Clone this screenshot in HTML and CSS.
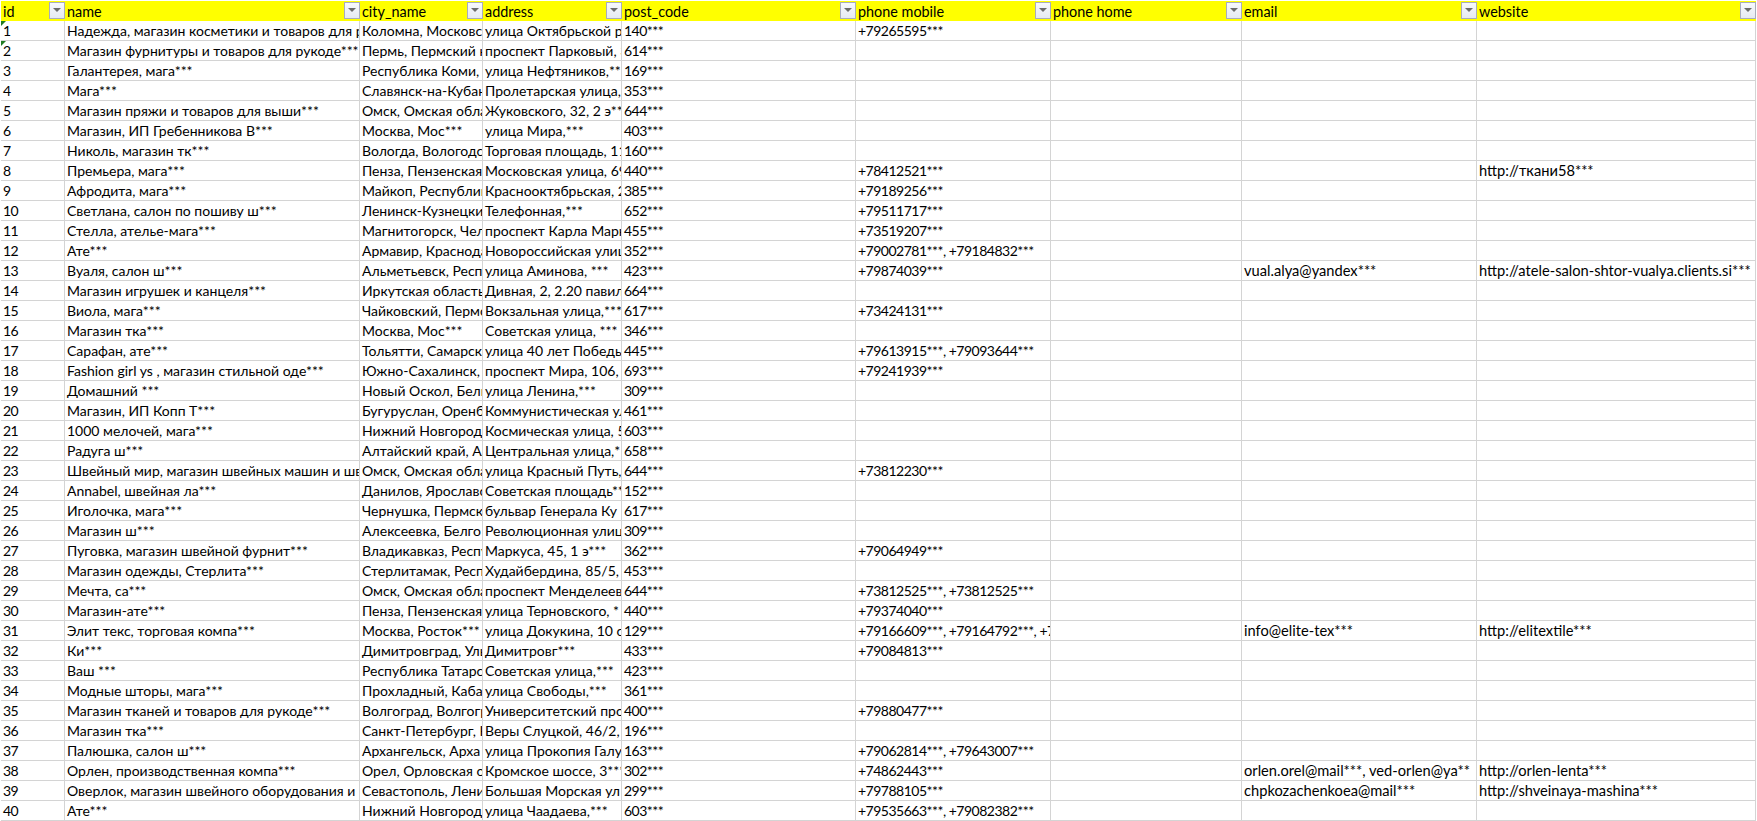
FILE: index.html
```html
<!DOCTYPE html>
<html lang="ru">
<head>
<meta charset="utf-8">
<title>Sheet</title>
<link rel="stylesheet" href="styles.css">
</head>
<body>
<table class="sheet">
<colgroup><col class="c-id"><col class="c-name"><col class="c-city"><col class="c-addr"><col class="c-post"><col class="c-mob"><col class="c-home"><col class="c-mail"><col class="c-web"></colgroup>
<thead><tr>
<th>id<span class="filter"></span></th><th>name<span class="filter"></span></th><th>city_name<span class="filter"></span></th><th>address<span class="filter"></span></th><th>post_code<span class="filter"></span></th><th>phone mobile<span class="filter"></span></th><th>phone home<span class="filter"></span></th><th>email<span class="filter"></span></th><th>website<span class="filter"></span></th>
</tr></thead>
<tbody>
<tr><td class="num flag">1</td><td>Надежда, магазин косметики и товаров для ру</td><td>Коломна, Московс</td><td>улица Октябрьской р</td><td class="num">140***</td><td class="num">+79265595***</td><td></td><td></td><td></td></tr>
<tr><td class="num flag">2</td><td>Магазин фурнитуры и товаров для рукоде***</td><td>Пермь, Пермский к</td><td>проспект Парковый, 3</td><td class="num">614***</td><td></td><td></td><td></td><td></td></tr>
<tr><td class="num">3</td><td>Галантерея, мага***</td><td>Республика Коми, </td><td>улица Нефтяников,**</td><td class="num">169***</td><td></td><td></td><td></td><td></td></tr>
<tr><td class="num">4</td><td>Мага***</td><td>Славянск-на-Кубан</td><td>Пролетарская улица, </td><td class="num">353***</td><td></td><td></td><td></td><td></td></tr>
<tr><td class="num">5</td><td>Магазин пряжи и товаров для выши***</td><td>Омск, Омская обла</td><td>Жуковского, 32, 2 э***</td><td class="num">644***</td><td></td><td></td><td></td><td></td></tr>
<tr><td class="num">6</td><td>Магазин, ИП Гребенникова В***</td><td>Москва, Мос***</td><td>улица Мира,***</td><td class="num">403***</td><td></td><td></td><td></td><td></td></tr>
<tr><td class="num">7</td><td>Николь, магазин тк***</td><td>Вологда, Вологодс</td><td>Торговая площадь, 11</td><td class="num">160***</td><td></td><td></td><td></td><td></td></tr>
<tr><td class="num">8</td><td>Премьера, мага***</td><td>Пенза, Пензенская</td><td>Московская улица, 69</td><td class="num">440***</td><td class="num">+78412521***</td><td></td><td></td><td class="lat">http://ткани58***</td></tr>
<tr><td class="num">9</td><td>Афродита, мага***</td><td>Майкоп, Республик</td><td>Краснооктябрьская, 2</td><td class="num">385***</td><td class="num">+79189256***</td><td></td><td></td><td></td></tr>
<tr><td class="num">10</td><td>Светлана, салон по пошиву ш***</td><td>Ленинск-Кузнецки</td><td>Телефонная,***</td><td class="num">652***</td><td class="num">+79511717***</td><td></td><td></td><td></td></tr>
<tr><td class="num">11</td><td>Стелла, ателье-мага***</td><td>Магнитогорск, Чел</td><td>проспект Карла Марк</td><td class="num">455***</td><td class="num">+73519207***</td><td></td><td></td><td></td></tr>
<tr><td class="num">12</td><td>Ате***</td><td>Армавир, Краснода</td><td>Новороссийская улиц</td><td class="num">352***</td><td class="num">+79002781***, +79184832***</td><td></td><td></td><td></td></tr>
<tr><td class="num">13</td><td>Вуаля, салон ш***</td><td>Альметьевск, Респ</td><td>улица Аминова, ***</td><td class="num">423***</td><td class="num">+79874039***</td><td></td><td class="lat">vual.alya@yandex***</td><td class="lat">http://atele-salon-shtor-vualya.clients.si***</td></tr>
<tr><td class="num">14</td><td>Магазин игрушек и канцеля***</td><td>Иркутская область,</td><td>Дивная, 2, 2.20 павил</td><td class="num">664***</td><td></td><td></td><td></td><td></td></tr>
<tr><td class="num">15</td><td>Виола, мага***</td><td>Чайковский, Пермс</td><td>Вокзальная улица,***</td><td class="num">617***</td><td class="num">+73424131***</td><td></td><td></td><td></td></tr>
<tr><td class="num">16</td><td>Магазин тка***</td><td>Москва, Мос***</td><td>Советская улица, ***</td><td class="num">346***</td><td></td><td></td><td></td><td></td></tr>
<tr><td class="num">17</td><td>Сарафан, ате***</td><td>Тольятти, Самарска</td><td>улица 40 лет Победы,</td><td class="num">445***</td><td class="num">+79613915***, +79093644***</td><td></td><td></td><td></td></tr>
<tr><td class="num">18</td><td>Fashion girl ys , магазин стильной оде***</td><td>Южно-Сахалинск, С</td><td>проспект Мира, 106, 1</td><td class="num">693***</td><td class="num">+79241939***</td><td></td><td></td><td></td></tr>
<tr><td class="num">19</td><td>Домашний ***</td><td>Новый Оскол, Белг</td><td>улица Ленина,***</td><td class="num">309***</td><td></td><td></td><td></td><td></td></tr>
<tr><td class="num">20</td><td>Магазин, ИП Копп Т***</td><td>Бугуруслан, Оренб</td><td>Коммунистическая ул</td><td class="num">461***</td><td></td><td></td><td></td><td></td></tr>
<tr><td class="num">21</td><td>1000 мелочей, мага***</td><td>Нижний Новгород,</td><td>Космическая улица, 5</td><td class="num">603***</td><td></td><td></td><td></td><td></td></tr>
<tr><td class="num">22</td><td>Радуга ш***</td><td>Алтайский край, Ал</td><td>Центральная улица,*</td><td class="num">658***</td><td></td><td></td><td></td><td></td></tr>
<tr><td class="num">23</td><td>Швейный мир, магазин швейных машин и шв</td><td>Омск, Омская обла</td><td>улица Красный Путь,</td><td class="num">644***</td><td class="num">+73812230***</td><td></td><td></td><td></td></tr>
<tr><td class="num">24</td><td>Annabel, швейная ла***</td><td>Данилов, Ярославс</td><td>Советская площадь**</td><td class="num">152***</td><td></td><td></td><td></td><td></td></tr>
<tr><td class="num">25</td><td>Иголочка, мага***</td><td>Чернушка, Пермск</td><td>бульвар Генерала Ку</td><td class="num">617***</td><td></td><td></td><td></td><td></td></tr>
<tr><td class="num">26</td><td>Магазин ш***</td><td>Алексеевка, Белго</td><td>Революционная улиц</td><td class="num">309***</td><td></td><td></td><td></td><td></td></tr>
<tr><td class="num">27</td><td>Пуговка, магазин швейной фурнит***</td><td>Владикавказ, Респу</td><td>Маркуса, 45, 1 э***</td><td class="num">362***</td><td class="num">+79064949***</td><td></td><td></td><td></td></tr>
<tr><td class="num">28</td><td>Магазин одежды, Стерлита***</td><td>Стерлитамак, Респ</td><td>Худайбердина, 85/5, 1</td><td class="num">453***</td><td></td><td></td><td></td><td></td></tr>
<tr><td class="num">29</td><td>Мечта, са***</td><td>Омск, Омская обла</td><td>проспект Менделеев</td><td class="num">644***</td><td class="num">+73812525***, +73812525***</td><td></td><td></td><td></td></tr>
<tr><td class="num">30</td><td>Магазин-ате***</td><td>Пенза, Пензенская</td><td>улица Терновского, *</td><td class="num">440***</td><td class="num">+79374040***</td><td></td><td></td><td></td></tr>
<tr><td class="num">31</td><td>Элит текс, торговая компа***</td><td>Москва, Росток***</td><td>улица Докукина, 10 с</td><td class="num">129***</td><td class="num">+79166609***, +79164792***, +7</td><td></td><td class="lat">info@elite-tex***</td><td class="lat">http://elitextile***</td></tr>
<tr><td class="num">32</td><td>Ки***</td><td>Димитровград, Уль</td><td>Димитровг***</td><td class="num">433***</td><td class="num">+79084813***</td><td></td><td></td><td></td></tr>
<tr><td class="num">33</td><td>Ваш ***</td><td>Республика Татарс</td><td>Советская улица,***</td><td class="num">423***</td><td></td><td></td><td></td><td></td></tr>
<tr><td class="num">34</td><td>Модные шторы, мага***</td><td>Прохладный, Кабар</td><td>улица Свободы,***</td><td class="num">361***</td><td></td><td></td><td></td><td></td></tr>
<tr><td class="num">35</td><td>Магазин тканей и товаров для рукоде***</td><td>Волгоград, Волгогр</td><td>Университетский про</td><td class="num">400***</td><td class="num">+79880477***</td><td></td><td></td><td></td></tr>
<tr><td class="num">36</td><td>Магазин тка***</td><td>Санкт-Петербург, Н</td><td>Веры Слуцкой, 46/2, 2</td><td class="num">196***</td><td></td><td></td><td></td><td></td></tr>
<tr><td class="num">37</td><td>Палюшка, салон ш***</td><td>Архангельск, Арха</td><td>улица Прокопия Галу</td><td class="num">163***</td><td class="num">+79062814***, +79643007***</td><td></td><td></td><td></td></tr>
<tr><td class="num">38</td><td>Орлен, производственная компа***</td><td>Орел, Орловская о</td><td>Кромское шоссе, 3***</td><td class="num">302***</td><td class="num">+74862443***</td><td></td><td class="lat">orlen.orel@mail***, ved-orlen@ya**</td><td class="lat">http://orlen-lenta***</td></tr>
<tr><td class="num">39</td><td>Оверлок, магазин швейного оборудования и</td><td>Севастополь, Лени</td><td>Большая Морская ул</td><td class="num">299***</td><td class="num">+79788105***</td><td></td><td class="lat">chpkozachenkoea@mail***</td><td class="lat">http://shveinaya-mashina***</td></tr>
<tr><td class="num">40</td><td>Ате***</td><td>Нижний Новгород,</td><td>улица Чаадаева,***</td><td class="num">603***</td><td class="num">+79535663***, +79082382***</td><td></td><td></td><td></td></tr>
</tbody>
</table>
</body>
</html>
```
FILE: styles.css
```css
html, body {
  margin: 0;
  background: #fff;
  overflow: hidden;
}
body {
  padding: 1px 0 0 1px;
}
.sheet {
  width: 1755px;
  table-layout: fixed;
  border-collapse: separate;
  border-spacing: 0;
  font-family: "Lato", "Open Sans", "Liberation Sans", sans-serif;
  font-size: 14px;
  color: #000;
}
.c-id { width: 64px; }
.c-name { width: 295px; }
.c-city { width: 123px; }
.c-addr { width: 139px; }
.c-post { width: 234px; }
.c-mob { width: 195px; }
.c-home { width: 191px; }
.c-mail { width: 235px; }
.c-web { width: 279px; }
th, td {
  box-sizing: border-box;
  height: 20px;
  padding: 0 0 0 2px;
  line-height: 19px;
  font-weight: 400;
  text-align: left;
  white-space: pre;
  overflow: hidden;
}
th {
  position: relative;
  background: #ffff00;
  font-size: 14.4px;
}
td {
  border-right: 1px solid #d4d4d4;
  border-bottom: 1px solid #d4d4d4;
}
.num {
  letter-spacing: -0.5px;
}
.lat {
  font-size: 14.67px;
}
.filter {
  position: absolute;
  top: 1px;
  right: 0;
  box-sizing: border-box;
  width: 16px;
  height: 17px;
  border: 1px solid #a8acbc;
  background: linear-gradient(#f7f9fc, #e6eaf1);
}
.filter::after {
  content: "";
  position: absolute;
  left: 3px;
  top: 5px;
  border-left: 4px solid transparent;
  border-right: 4px solid transparent;
  border-top: 4px solid #6c6c6c;
}
.flag {
  position: relative;
}
.flag::before {
  content: "";
  position: absolute;
  left: 0;
  top: 0;
  border-top: 5px solid #217a21;
  border-right: 5px solid transparent;
}
```
